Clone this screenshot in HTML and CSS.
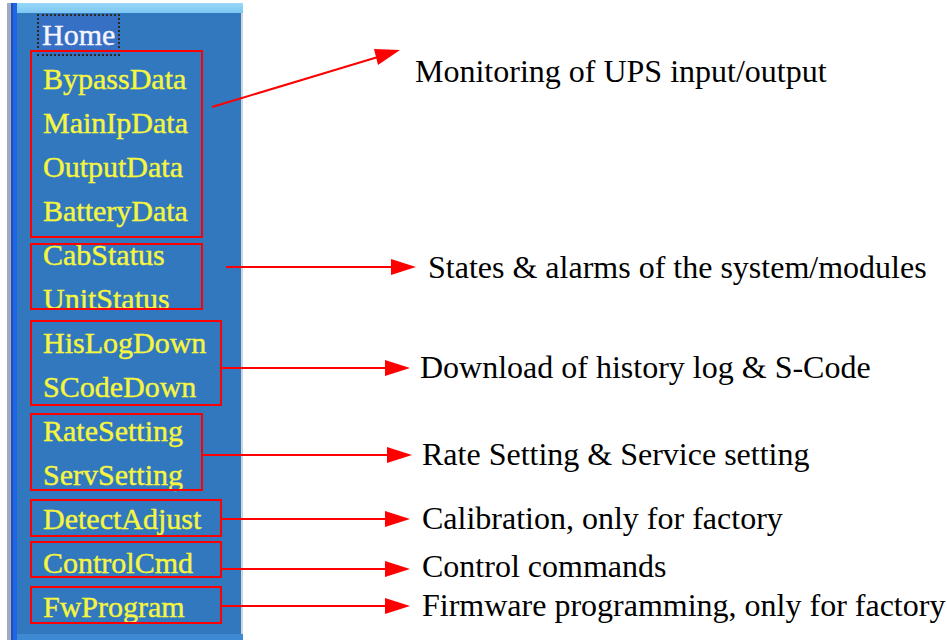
FILE: index.html
```html
<!DOCTYPE html>
<html lang="en">
<head>
  <meta charset="UTF-8">
  <title>UPS Web Menu</title>
  <link rel="stylesheet" href="styles.css">
</head>
<body>
  <div class="figure">
    <div class="frame">
      <div class="edge"></div>
      <div class="pane">
        <div class="topband"></div>
        <ul class="menu">
          <li><span class="current">Home</span></li>
          <li>BypassData</li>
          <li>MainIpData</li>
          <li>OutputData</li>
          <li>BatteryData</li>
          <li>CabStatus</li>
          <li>UnitStatus</li>
          <li>HisLogDown</li>
          <li>SCodeDown</li>
          <li>RateSetting</li>
          <li>ServSetting</li>
          <li>DetectAdjust</li>
          <li>ControlCmd</li>
          <li>FwProgram</li>
        </ul>
        <div class="bottomband"></div>
      </div>
    </div>

    <!-- red annotation boxes drawn over the menu -->
    <div class="mark mark-io"></div>
    <div class="mark mark-status"></div>
    <div class="mark mark-down"></div>
    <div class="mark mark-setting"></div>
    <div class="mark mark-adjust"></div>
    <div class="mark mark-cmd"></div>
    <div class="mark mark-fw"></div>

    <svg class="arrows" width="947" height="640" viewBox="0 0 947 640">
      <g stroke="#ff0000" stroke-width="2" fill="none">
        <line x1="212" y1="107" x2="378" y2="57"/>
        <line x1="226" y1="267" x2="393" y2="267"/>
        <line x1="221" y1="368" x2="387" y2="368"/>
        <line x1="203" y1="455" x2="389" y2="455"/>
        <line x1="221" y1="519" x2="387" y2="519"/>
        <line x1="221" y1="569" x2="387" y2="569"/>
        <line x1="221" y1="606" x2="387" y2="606"/>
      </g>
      <g fill="#ff0000">
        <polygon points="400,50 378,65 374,49"/>
        <polygon points="416,267 391,259 391,275"/>
        <polygon points="410,368 385,360 385,376"/>
        <polygon points="412,455 387,447 387,463"/>
        <polygon points="410,519 385,511 385,527"/>
        <polygon points="410,569 385,561 385,577"/>
        <polygon points="410,606 385,598 385,614"/>
      </g>
    </svg>

    <p class="note note-io">Monitoring of UPS input/output</p>
    <p class="note note-status">States &amp; alarms of the system/modules</p>
    <p class="note note-down">Download of history log &amp; S-Code</p>
    <p class="note note-setting">Rate Setting &amp; Service setting</p>
    <p class="note note-adjust">Calibration, only for factory</p>
    <p class="note note-cmd">Control commands</p>
    <p class="note note-fw">Firmware programming, only for factory</p>
  </div>
</body>
</html>
```

FILE: styles.css
```css
body {
  margin: 0;
  background-color: white;
  font-family: "Liberation Serif", "Times New Roman", serif;
}
.figure {
  position: relative;
  width: 947px;
  height: 640px;
  overflow: hidden;
}
.frame {
  display: flex;
  width: 236px;
  height: 637px;
  margin: 3px 0 0 7px;
}
.edge {
  width: 10px;
  background: linear-gradient(to right, #a3abbb 0 4px, #1b4fc4 4px 6px, #1f66e6 6px 10px);
}
.pane {
  flex: 1;
  display: flex;
  flex-direction: column;
}
.topband {
  height: 10px;
  background: linear-gradient(#9ad8fa, #7cc6f2);
}
.menu {
  flex: 1;
  list-style: none;
  margin: 0;
  padding: 0 0 0 26px;
  background-color: #3278be;
  border-right: 2px solid #ccd4dc;
}
.menu li {
  height: 44px;
  line-height: 44px;
  font-size: 30px;
  color: #f6f63e;
  -webkit-text-stroke: 0.4px #f6f63e;
  white-space: nowrap;
}
.current {
  display: inline-block;
  line-height: 38px;
  margin-left: -6px;
  padding: 0 3px;
  border: 2px dotted #2f2b1c;
  background-color: #3670c4;
  color: #f6f4ff;
  -webkit-text-stroke: 0.4px #f6f4ff;
}
.bottomband {
  height: 6px;
  background-color: #3d8ad2;
}

.mark {
  position: absolute;
  left: 30px;
  width: 173px;
  box-sizing: border-box;
  border: 2px solid #ff0000;
}
.mark-io { top: 50px; height: 188px; }
.mark-status { top: 243px; height: 67px; }
.mark-down { top: 320px; height: 86px; width: 192px; }
.mark-setting { top: 413px; height: 78px; }
.mark-adjust { top: 499px; height: 38px; width: 192px; }
.mark-cmd { top: 541px; height: 37px; width: 192px; }
.mark-fw { top: 586px; height: 38px; width: 192px; }

.arrows {
  position: absolute;
  left: 0;
  top: 0;
}

.note {
  position: absolute;
  margin: 0;
  font-size: 32px;
  line-height: 32px;
  color: black;
  white-space: nowrap;
}
.note-io { left: 415px; top: 55px; }
.note-status { left: 428px; top: 251px; }
.note-down { left: 420px; top: 351px; }
.note-setting { left: 422px; top: 438px; }
.note-adjust { left: 422px; top: 502px; }
.note-cmd { left: 422px; top: 550px; }
.note-fw { left: 422px; top: 589px; }
```
